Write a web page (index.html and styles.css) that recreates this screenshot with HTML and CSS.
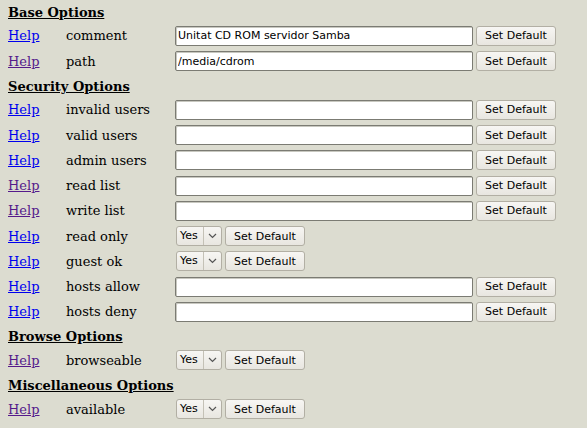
FILE: index.html
```html
<!DOCTYPE html>
<html>
<head>
<meta charset="utf-8">
<link rel="stylesheet" href="styles.css">
</head>
<body>
<div class="form">
  <div class="head"><span>Base Options</span></div>
  <div class="row"><a class="help" href="#">Help</a><span class="name">comment</span><input class="text" type="text" value="Unitat CD ROM servidor Samba"><button class="btn">Set Default</button></div>
  <div class="row"><a class="help visited" href="#">Help</a><span class="name">path</span><input class="text" type="text" value="/media/cdrom"><button class="btn">Set Default</button></div>

  <div class="head"><span>Security Options</span></div>
  <div class="row"><a class="help" href="#">Help</a><span class="name">invalid users</span><input class="text" type="text" value=""><button class="btn">Set Default</button></div>
  <div class="row"><a class="help" href="#">Help</a><span class="name">valid users</span><input class="text" type="text" value=""><button class="btn">Set Default</button></div>
  <div class="row"><a class="help" href="#">Help</a><span class="name">admin users</span><input class="text" type="text" value=""><button class="btn">Set Default</button></div>
  <div class="row"><a class="help visited" href="#">Help</a><span class="name">read list</span><input class="text" type="text" value=""><button class="btn">Set Default</button></div>
  <div class="row"><a class="help visited" href="#">Help</a><span class="name">write list</span><input class="text" type="text" value=""><button class="btn">Set Default</button></div>
  <div class="row"><a class="help" href="#">Help</a><span class="name">read only</span><span class="sel"><span class="sel-val">Yes</span><span class="sel-arrow"><svg width="9" height="6" viewBox="0 0 9 6"><path d="M1 1 L4.5 4.5 L8 1" fill="none" stroke="#555" stroke-width="1.2"/></svg></span></span><button class="btn">Set Default</button></div>
  <div class="row"><a class="help" href="#">Help</a><span class="name">guest ok</span><span class="sel"><span class="sel-val">Yes</span><span class="sel-arrow"><svg width="9" height="6" viewBox="0 0 9 6"><path d="M1 1 L4.5 4.5 L8 1" fill="none" stroke="#555" stroke-width="1.2"/></svg></span></span><button class="btn">Set Default</button></div>
  <div class="row"><a class="help" href="#">Help</a><span class="name">hosts allow</span><input class="text" type="text" value=""><button class="btn">Set Default</button></div>
  <div class="row"><a class="help" href="#">Help</a><span class="name">hosts deny</span><input class="text" type="text" value=""><button class="btn">Set Default</button></div>

  <div class="head"><span>Browse Options</span></div>
  <div class="row"><a class="help visited" href="#">Help</a><span class="name">browseable</span><span class="sel"><span class="sel-val">Yes</span><span class="sel-arrow"><svg width="9" height="6" viewBox="0 0 9 6"><path d="M1 1 L4.5 4.5 L8 1" fill="none" stroke="#555" stroke-width="1.2"/></svg></span></span><button class="btn">Set Default</button></div>

  <div class="head"><span>Miscellaneous Options</span></div>
  <div class="row"><a class="help visited" href="#">Help</a><span class="name">available</span><span class="sel"><span class="sel-val">Yes</span><span class="sel-arrow"><svg width="9" height="6" viewBox="0 0 9 6"><path d="M1 1 L4.5 4.5 L8 1" fill="none" stroke="#555" stroke-width="1.2"/></svg></span></span><button class="btn">Set Default</button></div>
</div>
</body>
</html>
```

FILE: styles.css
```css
html, body {
  margin: 0;
  padding: 0;
  background: #dcdcd0;
}
body {
  font-family: "DejaVu Serif", serif;
  font-size: 13px;
  color: #000;
}
.form {
  display: flex;
  flex-direction: column;
  padding: 0 0 0 8px;
}
.head {
  box-sizing: border-box;
  height: 23.35px;
  padding-top: 3px;
  line-height: 20.35px;
  font-size: 13px;
  font-weight: bold;
}
.head span {
  text-decoration: underline;
}
.row {
  height: 25.25px;
  display: flex;
  align-items: center;
}
.help {
  width: 58px;
  color: #0000ee;
  text-decoration: underline;
}
.help.visited {
  color: #551a8b;
}
.name {
  width: 109px;
}
.text {
  box-sizing: border-box;
  width: 298px;
  height: 20px;
  margin: 0;
  padding: 0 2px;
  border: 1px solid #7b7b73;
  border-radius: 2px;
  background: #fff;
  box-shadow: inset 1px 1px 0 #c8c8c0;
  font-family: "DejaVu Sans", sans-serif;
  font-size: 11px;
  color: #000;
}
.btn {
  box-sizing: border-box;
  width: 80px;
  height: 20px;
  margin: 0 0 0 3px;
  padding: 0;
  border: 1px solid #b2afa4;
  border-radius: 3px;
  background: linear-gradient(#f7f6f3, #e8e6e0);
  font-family: "DejaVu Sans", sans-serif;
  font-size: 11px;
  color: #000;
}
.sel {
  box-sizing: border-box;
  display: flex;
  align-items: stretch;
  width: 46px;
  height: 20px;
  margin-left: 1px;
  border: 1px solid #b2afa4;
  border-radius: 3px;
  background: linear-gradient(#f7f6f3, #e8e6e0);
  font-family: "DejaVu Sans", sans-serif;
  font-size: 11px;
}
.sel-val {
  width: 27px;
  line-height: 18px;
  padding-left: 3px;
  box-sizing: border-box;
  border-right: 1px solid #c4c1b6;
}
.sel-arrow {
  flex: 1;
  display: flex;
  align-items: center;
  justify-content: center;
}
```
